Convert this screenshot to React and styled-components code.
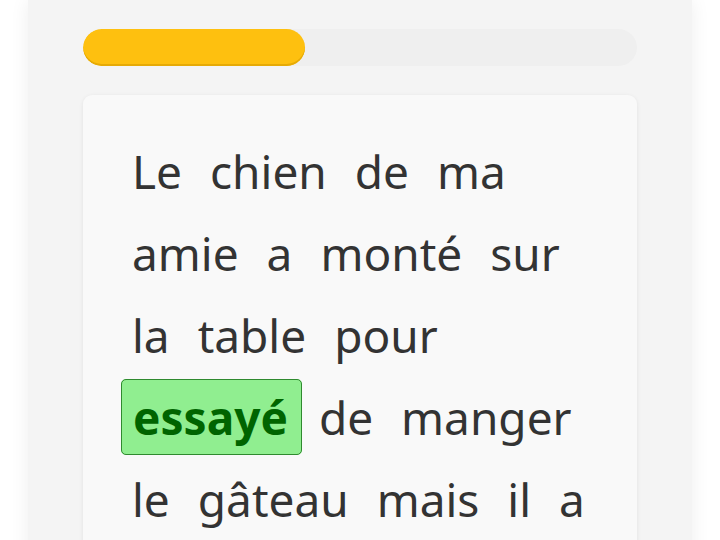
import React from 'react';
import styled, { createGlobalStyle } from 'styled-components';

const GlobalStyle = createGlobalStyle`
  html, body {
    margin: 0;
    padding: 0;
    background: #ffffff;
    font-family: "Noto Sans", "Open Sans", sans-serif;
  }
`;

const Column = styled.div`
  width: 664px;
  min-height: 100vh;
  margin: 0 auto;
  box-sizing: border-box;
  padding: 29px 55px 40px;
  background: #f4f4f4;
  box-shadow: 0 0 18px rgba(0, 0, 0, 0.07);
  display: flex;
  flex-direction: column;
  gap: 29px;
`;

const Track = styled.div`
  height: 37px;
  border-radius: 19px;
  background: #efefef;
  overflow: hidden;
`;

const Fill = styled.div`
  height: 100%;
  border-radius: 19px;
  background: #fec00f;
  box-shadow: inset 0 -2px 0 #e6aa05;
`;

const Card = styled.div`
  background: #f9f9f9;
  border-radius: 9px;
  box-shadow: 0 1px 4px rgba(0, 0, 0, 0.08);
  padding: 35px 38px;
  font-size: 46px;
  line-height: 82px;
  word-spacing: -6px;
  color: #333333;
`;

const Word = styled.span`
  padding: 6px 10px;
  border: 1px solid transparent;
  border-radius: 5px;
  word-spacing: normal;
  ${({ $active }) =>
    $active &&
    `
    padding: 6px 13px 6px 11px;
    background: #90ee90;
    border-color: #2f8a2f;
    color: #006400;
    font-weight: 700;
  `}
`;

const words = [
  'Le', 'chien', 'de', 'ma', 'amie', 'a', 'monté', 'sur', 'la', 'table',
  'pour', 'essayé', 'de', 'manger', 'le', 'gâteau', 'mais', 'il', 'a',
  'mangé', 'la', 'crème', 'et', 'il', 'est', 'tombé',
];

export default function App() {
  const progress = 40;
  return (
    <>
      <GlobalStyle />
      <Column>
        <Track>
          <Fill style={{ width: `${progress}%` }} />
        </Track>
        <Card>
          {words.map((w, i) => (
            <React.Fragment key={i}>
              <Word $active={i === 11}>{w}</Word>{' '}
            </React.Fragment>
          ))}
        </Card>
      </Column>
    </>
  );
}
